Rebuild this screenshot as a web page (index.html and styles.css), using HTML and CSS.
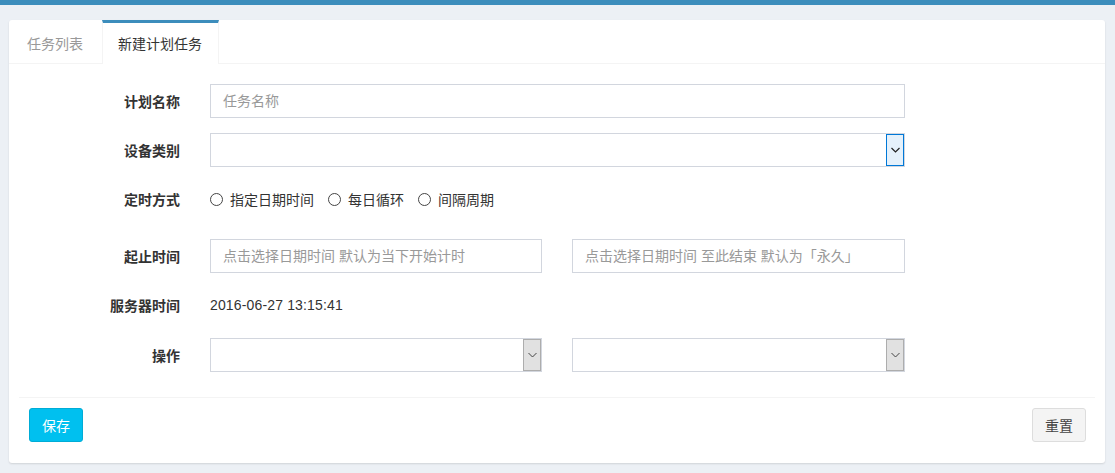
FILE: index.html
```html
<!DOCTYPE html>
<html lang="zh">
<head>
<meta charset="utf-8">
<title>新建计划任务</title>
<link rel="stylesheet" href="styles.css">
</head>
<body>
<div class="topbar"></div>
<div class="page">
  <div class="card">
    <ul class="tabs">
      <li class="tab">任务列表</li>
      <li class="tab active">新建计划任务</li>
    </ul>
    <div class="tab-body">
      <form class="form">
        <div class="row">
          <label class="label">计划名称</label>
          <div class="field"><div class="input placeholder">任务名称</div></div>
        </div>
        <div class="row">
          <label class="label">设备类别</label>
          <div class="field"><div class="select"><span class="arrow focus"><svg width="9" height="6" viewBox="0 0 9 6"><path d="M0.5 1 L4.5 5 L8.5 1" fill="none" stroke="#222" stroke-width="1.2"/></svg></span></div></div>
        </div>
        <div class="row radios-row">
          <label class="label">定时方式</label>
          <div class="field radios">
            <span class="radio"><i class="dot"></i>指定日期时间</span>
            <span class="radio"><i class="dot"></i>每日循环</span>
            <span class="radio"><i class="dot"></i>间隔周期</span>
          </div>
        </div>
        <div class="row">
          <label class="label">起止时间</label>
          <div class="field half">
            <div class="input placeholder">点击选择日期时间 默认为当下开始计时</div>
            <div class="input placeholder">点击选择日期时间 至此结束 默认为「永久」</div>
          </div>
        </div>
        <div class="row server-row">
          <label class="label">服务器时间</label>
          <div class="field"><span class="static">2016-06-27 13:15:41</span></div>
        </div>
        <div class="row">
          <label class="label">操作</label>
          <div class="field half">
            <div class="select"><span class="arrow"><svg width="9" height="6" viewBox="0 0 9 6"><path d="M0.5 1 L4.5 5 L8.5 1" fill="none" stroke="#444" stroke-width="1"/></svg></span></div>
            <div class="select"><span class="arrow"><svg width="9" height="6" viewBox="0 0 9 6"><path d="M0.5 1 L4.5 5 L8.5 1" fill="none" stroke="#444" stroke-width="1"/></svg></span></div>
          </div>
        </div>
      </form>
      <div class="footer">
        <button class="btn btn-info" type="button">保存</button>
        <button class="btn btn-default" type="button">重置</button>
      </div>
    </div>
  </div>
</div>
</body>
</html>
```
FILE: styles.css
```css
html, body {
  margin: 0;
  padding: 0;
}
body {
  background: #ecf0f5;
  font-family: "Liberation Sans", "Noto Sans CJK SC", sans-serif;
  font-size: 14px;
  color: #333;
  width: 1115px;
  height: 473px;
  overflow: hidden;
}
.topbar {
  height: 5px;
  background: #3c8dbc;
}
.page {
  padding: 15px 10px 0 9px;
}
.card {
  background: #fff;
  border-radius: 3px;
  box-shadow: 0 1px 2px rgba(0,0,0,0.12);
  padding-bottom: 10px;
}
.tabs {
  list-style: none;
  margin: 0;
  padding: 0;
  display: flex;
  border-bottom: 1px solid #f4f4f4;
  height: 43px;
}
.tab {
  color: #999;
  border-top: 3px solid transparent;
  margin-bottom: -1px;
  line-height: 42px;
  height: 41px;
  width: 56px;
  padding: 0 19px 0 18px;
}
.tab.active {
  width: auto;
  padding: 0 16px 0 15px;
  color: #333;
  border-top-color: #3c8dbc;
  border-left: 1px solid #f4f4f4;
  border-right: 1px solid #f4f4f4;
  background: #fff;
  height: 41px;
}
.tab-body {
  padding: 20px 10px 0;
}
.form {
  display: flex;
  flex-direction: column;
  gap: 15px;
  padding-bottom: 25px;
}
.row {
  display: flex;
  align-items: center;
  gap: 30px;
  height: 34px;
}
.radios-row {
  margin-bottom: 8px;
}
.server-row {
  margin-bottom: 1px;
}
.label {
  width: 161px;
  text-align: right;
  font-weight: bold;
}
.field {
  width: 695px;
}
.field.half {
  display: grid;
  grid-template-columns: 332px 333px;
  gap: 30px;
}
.input, .select {
  box-sizing: border-box;
  height: 34px;
  border: 1px solid #d2d6de;
  padding: 0 12px;
  line-height: 32px;
  background: #fff;
  white-space: nowrap;
  overflow: hidden;
}
.placeholder {
  color: #999;
}
.select {
  position: relative;
  padding: 0;
}
.arrow {
  position: absolute;
  right: 0;
  top: 0;
  bottom: 0;
  width: 16px;
  background: #e1e1e1;
  border: 1px solid #adadad;
  display: flex;
  align-items: center;
  justify-content: center;
}
.arrow.focus {
  background: #e5f1fb;
  border-color: #0078d7;
}
.radios {
  display: flex;
  gap: 14px;
  font-size: 14px;
}
.radio {
  display: inline-flex;
  align-items: center;
  gap: 7px;
}
.dot {
  display: inline-block;
  box-sizing: border-box;
  width: 13px;
  height: 13px;
  border: 1px solid #444;
  border-radius: 50%;
}
.static {
  font-size: 14px;
  letter-spacing: 0.15px;
}
.footer {
  border-top: 1px solid #f4f4f4;
  padding: 10px 9px 11px 10px;
  display: flex;
  justify-content: space-between;
}
.btn {
  font-family: "Liberation Sans", "Noto Sans CJK SC", sans-serif;
  font-size: 14px;
  height: 34px;
  padding: 0 12px;
  border-radius: 3px;
  border: 1px solid;
  cursor: pointer;
}
.btn-info {
  background: #00c0ef;
  border-color: #00acd6;
  color: #fff;
}
.btn-default {
  background: #f4f4f4;
  border-color: #ddd;
  color: #444;
}
```
